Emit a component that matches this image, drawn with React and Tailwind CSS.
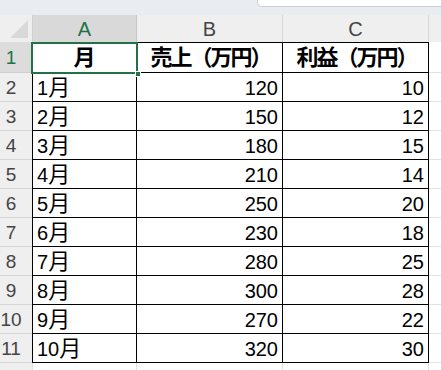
import React from "react";

const rows = [
  ["1", "120", "10"],
  ["2", "150", "12"],
  ["3", "180", "15"],
  ["4", "210", "14"],
  ["5", "250", "20"],
  ["6", "230", "18"],
  ["7", "280", "25"],
  ["8", "300", "28"],
  ["9", "270", "22"],
  ["10", "320", "30"],
];

const font = { fontFamily: '"Liberation Sans", "Noto Sans CJK JP", sans-serif' };

export default function App() {
  return (
    <div
      className="w-[441px] h-[370px] overflow-hidden bg-white text-black"
      style={font}
    >
      {/* top strip */}
      <div className="h-[15px] bg-[#e9ecf0] relative">
        <div className="absolute left-[257px] top-[-10px] w-[200px] h-[17px] bg-white border border-[#c9cdd2] rounded-[5px]" />
      </div>

      {/* column header row */}
      <div className="flex h-[27px] bg-[#efefef] text-[20px] leading-none text-[#444]">
        <div className="w-[33px] h-full border-r border-[#d0d0d0] relative overflow-hidden">
          <div className="absolute right-[4px] bottom-[4px] w-0 h-0 border-l-[18px] border-l-transparent border-b-[18px] border-b-[#d9d9d9]" />
        </div>
        <div className="w-[104px] h-full bg-[#d9d9d9] border-r border-[#c6c6c6] flex items-end justify-center pb-[3px] text-[#217346]">
          A
        </div>
        <div className="w-[146px] h-full border-r border-[#d6d6d6] flex items-end justify-center pb-[3px]">
          B
        </div>
        <div className="w-[146px] h-full border-r border-[#d6d6d6] flex items-end justify-center pb-[3px]">
          C
        </div>
        <div className="flex-1 h-full" />
      </div>

      {/* row 1 (headers) */}
      <div className="flex h-[31px]">
        <div className="w-[32px] h-full bg-[#dcdcdc] border-b border-[#cfcfcf] flex items-center">
          <span className="w-[22px] text-center text-[19px] leading-none text-[#217346]">1</span>
        </div>
        <div className="w-[105px] h-full border-l border-r border-t border-b border-black relative flex items-center justify-center font-bold text-[22px] leading-none">
          月
          <div className="absolute left-[-2px] top-[-1px] right-[-2px] bottom-[-2px] border-2 border-[#217346]" />
          <div className="absolute right-[-5px] bottom-[-5px] w-[6px] h-[6px] bg-[#217346] border border-white" />
        </div>
        <div className="w-[146px] h-full border-r border-t border-b border-black flex items-center justify-center pl-[2px] font-bold text-[22px] tracking-[-2px] leading-none">
          売上（万円）
        </div>
        <div className="w-[146px] h-full border-r border-t border-b border-black flex items-center justify-center pl-[2px] font-bold text-[22px] tracking-[-2px] leading-none">
          利益（万円）
        </div>
        <div className="flex-1 h-full border-b border-[#e1e1e1]" />
      </div>

      {rows.map((r, i) => (
        <div key={i} className="flex h-[29px]">
          <div className="w-[32px] h-full bg-[#efefef] border-b border-[#d6d6d6] flex items-center">
            <span className="w-[22px] text-center text-[19px] leading-none text-[#444]">{i + 2}</span>
          </div>
          <div className="w-[105px] h-full border-l border-r border-b border-black flex items-center pl-[4px] pt-[2px] text-[20px] leading-none">
            {r[0]}
            <span className="text-[22px]">月</span>
          </div>
          <div className="w-[146px] h-full border-r border-b border-black flex items-center justify-end pr-[4px] pt-[2px] text-[20px] leading-none">
            {r[1]}
          </div>
          <div className="w-[146px] h-full border-r border-b border-black flex items-center justify-end pr-[4px] pt-[2px] text-[20px] leading-none">
            {r[2]}
          </div>
          <div className="flex-1 h-full border-b border-[#e1e1e1]" />
        </div>
      ))}

      {/* row 12 partial */}
      <div className="flex h-[29px]">
        <div className="w-[32px] h-full bg-[#efefef]" />
        <div className="w-[105px] h-full border-l border-r border-[#e1e1e1]" />
        <div className="w-[146px] h-full border-r border-[#e1e1e1]" />
        <div className="w-[146px] h-full border-r border-[#e1e1e1]" />
        <div className="flex-1 h-full" />
      </div>
    </div>
  );
}
